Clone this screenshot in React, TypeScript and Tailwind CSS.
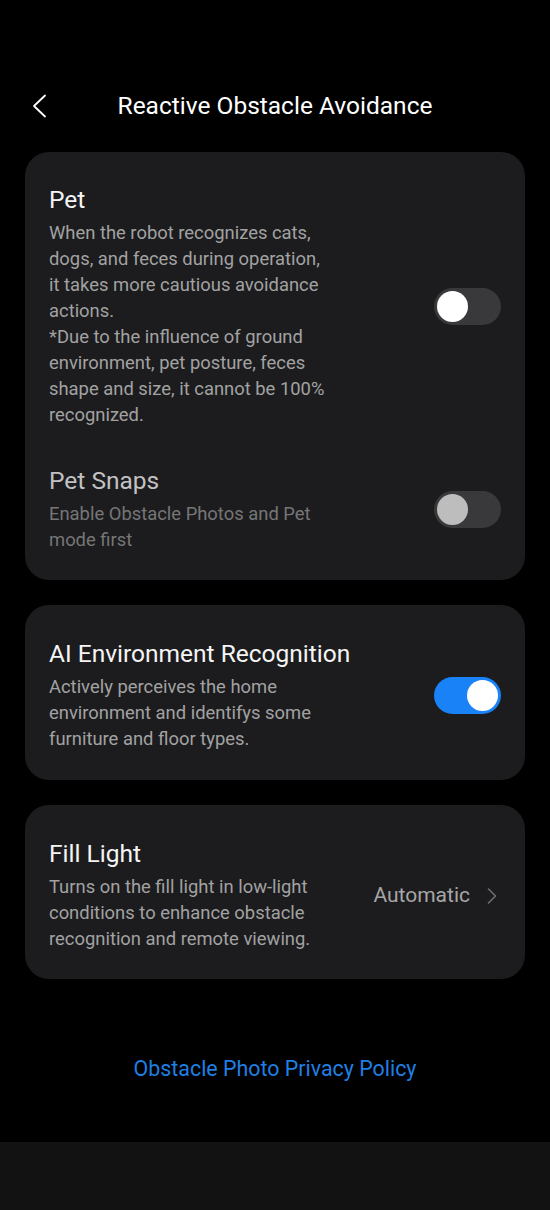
import React from "react";

function Toggle({ on, disabled }: { on?: boolean; disabled?: boolean }) {
  return (
    <div
      className={`w-[67px] h-[37px] rounded-full flex items-center px-[3px] shrink-0 ${
        on ? "bg-[#1a82f7] justify-end" : "bg-[#39393c] justify-start"
      }`}
    >
      <div
        className={`w-[31px] h-[31px] rounded-full ${
          disabled ? "bg-[#bdbdbd]" : "bg-white"
        }`}
      />
    </div>
  );
}

function Row({
  title,
  lines,
  right,
  dim,
}: {
  title: string;
  lines: string[];
  right: React.ReactNode;
  dim?: boolean;
}) {
  return (
    <div className="flex items-center justify-between">
      <div className="w-[300px]">
        <div
          className={`text-[24.5px] leading-[30px] whitespace-nowrap ${
            dim ? "text-[#c2c2c2]" : "text-[#f5f5f5]"
          }`}
        >
          {title}
        </div>
        <div
          className={`mt-[5px] text-[18.4px] leading-[26px] ${
            dim ? "text-[#767676]" : "text-[#a2a2a2]"
          }`}
        >
          {lines.map((l, i) => (
            <div key={i} className="whitespace-nowrap">
              {l}
            </div>
          ))}
        </div>
      </div>
      {right}
    </div>
  );
}

export default function App() {
  return (
    <div
      className="w-[550px] h-[1210px] bg-black flex flex-col"
      style={{ fontFamily: "Roboto, 'Noto Sans', sans-serif" }}
    >
      <div className="mt-[78px] h-[56px] grid grid-cols-[80px_1fr_80px] items-center">
        <div className="pl-[31px]">
          <svg width="16" height="24" viewBox="0 0 16 24" fill="none">
            <path
              d="M14 1.5 L3 12 L14 22.5"
              stroke="#ffffff"
              strokeWidth="1.8"
              strokeLinecap="round"
              strokeLinejoin="round"
            />
          </svg>
        </div>
        <div className="text-center text-white text-[24.5px] leading-[30px] whitespace-nowrap">
          Reactive Obstacle Avoidance
        </div>
        <div />
      </div>

      <div className="mt-[18px] px-[25px] flex flex-col gap-[25px]">
        <div className="rounded-[24px] bg-[#1c1c1e] pl-[24px] pr-[24px] pt-[33px] pb-[27px]">
          <Row
            title="Pet"
            lines={[
              "When the robot recognizes cats,",
              "dogs, and feces during operation,",
              "it takes more cautious avoidance",
              "actions.",
              "*Due to the influence of ground",
              "environment, pet posture, feces",
              "shape and size, it cannot be 100%",
              "recognized.",
            ]}
            right={<Toggle />}
          />
          <div className="h-[38px]" />
          <Row
            title="Pet Snaps"
            dim
            lines={["Enable Obstacle Photos and Pet", "mode first"]}
            right={<Toggle disabled />}
          />
        </div>

        <div className="rounded-[24px] bg-[#1c1c1e] pl-[24px] pr-[24px] pt-[34px] pb-[28px]">
          <Row
            title="AI Environment Recognition"
            lines={[
              "Actively perceives the home",
              "environment and identifys some",
              "furniture and floor types.",
            ]}
            right={<Toggle on />}
          />
        </div>

        <div className="rounded-[24px] bg-[#1c1c1e] pl-[24px] pr-[28px] pt-[34px] pb-[27px]">
          <Row
            title="Fill Light"
            lines={[
              "Turns on the fill light in low-light",
              "conditions to enhance obstacle",
              "recognition and remote viewing.",
            ]}
            right={
              <div className="flex items-center gap-[17px]">
                <span className="text-[21px] text-[#a6a6a6] whitespace-nowrap">Automatic</span>
                <svg width="10" height="16" viewBox="0 0 10 16" fill="none">
                  <path
                    d="M1.5 1 L8.5 8 L1.5 15"
                    stroke="#6e6e72"
                    strokeWidth="1.6"
                    strokeLinecap="round"
                    strokeLinejoin="round"
                  />
                </svg>
              </div>
            }
          />
        </div>
      </div>

      <div className="mt-[75px] text-center text-[21.4px] leading-[30px] text-[#1f7fe3]">
        Obstacle Photo Privacy Policy
      </div>

      <div className="flex-1" />
      <div className="h-[68px] bg-[#121212]" />
    </div>
  );
}
